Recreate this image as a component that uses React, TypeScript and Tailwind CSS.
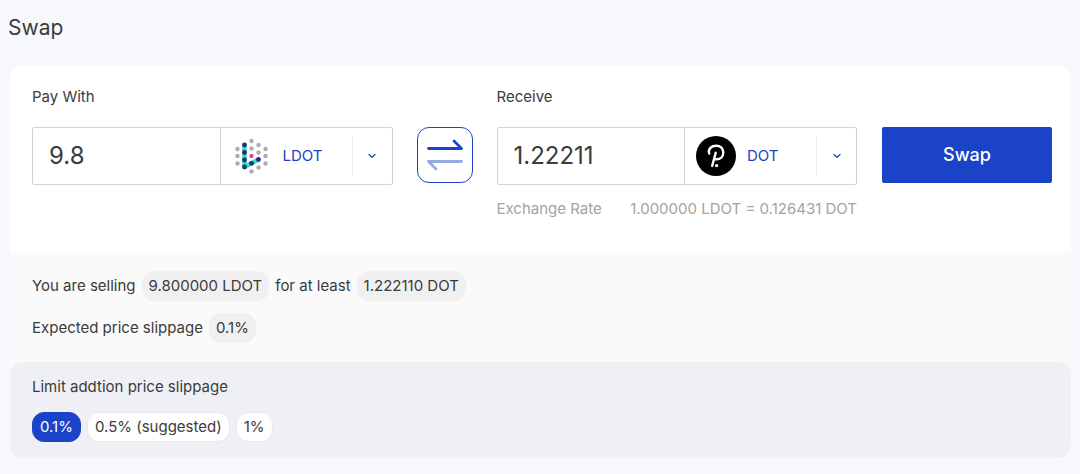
import { useState } from "react";
import type { ReactNode } from "react";

const GRAY_DOTS = [
  [19.5, 5], [26.5, 9], [33.5, 13], [5.5, 13], [5.5, 20], [5.5, 27.5], [19.5, 12.5], [26.5, 16.5], [33.5, 20], [33.5, 27.5], [26.5, 31.5], [19.5, 35.5],
];
const NAVY_DOTS = [[12.5, 9], [12.5, 16.5], [12.5, 24], [12.5, 31], [19.5, 27.3], [26.5, 23.5]];

function LdotLogo() {
  return (
    <svg viewBox="0 0 40 40" className="size-10" aria-hidden="true">
      <path d="M12.500 9V31L26.500 23.500" fill="none" stroke="#3fdcb8" strokeWidth="4.600" strokeLinejoin="round" />
      {GRAY_DOTS.map(([x, y]) => (
        <circle key={`${x}-${y}`} cx={x} cy={y} r="2.2" fill="#adadad" />
      ))}
      {NAVY_DOTS.map(([x, y]) => (
        <circle key={`${x}-${y}`} cx={x} cy={y} r="2.4" fill="#27307f" />
      ))}
      <circle cx="19.500" cy="20" r="2.2" fill="#d9489b" />
    </svg>
  );
}

function DotLogo() {
  return (
    <svg viewBox="0 0 40 40" className="size-10" aria-hidden="true">
      <circle cx="20" cy="20" r="20" fill="#000" />
      <path d="M13.200 17.500C11.800 12.800 15.500 9.700 20.200 9.700C24.500 9.700 27.300 12.600 27.300 16.500C27.300 20.500 24.500 23.300 20.500 23.300H18.300M19.700 16.800L16.200 29.800" fill="none" stroke="#fff" strokeWidth="2.400" strokeLinecap="round" />
      <circle cx="20.600" cy="29.600" r="1.600" fill="#fff" />
    </svg>
  );
}

type FieldProps = {
  id: string;
  label: string;
  amount: string;
  token: string;
  logo: ReactNode;
  children?: ReactNode;
};

function TokenField({ id, label, amount, token, logo, children }: FieldProps) {
  return (
    <div className="min-w-0 flex-1">
      <label htmlFor={id} className="block">{label}</label>
      <div className="mt-[19px] flex h-[58px] rounded-xs border border-[#d4d4d4]">
        <input
          id={id}
          defaultValue={amount}
          inputMode="decimal"
          className="w-0 min-w-0 flex-1 border-r border-[#d4d4d4] px-4 text-2xl outline-none"
        />
        <div className="relative w-[171px]">
          <span className="pointer-events-none absolute inset-y-0 left-[11px] flex items-center">{logo}</span>
          <select
            aria-label={`${label} token`}
            defaultValue={token}
            className="h-full w-full cursor-pointer appearance-none bg-transparent pl-[62px] text-[#1b43c7] outline-none"
          >
            <option>LDOT</option>
            <option>DOT</option>
          </select>
          <span className="pointer-events-none absolute inset-y-2 right-0 flex w-10 items-center justify-center border-l border-[#f0f0f0]">
            <svg viewBox="0 0 8 8" className="size-2 text-[#1b43c7]" fill="none" stroke="currentColor" strokeWidth="1.200" strokeLinecap="round" strokeLinejoin="round" aria-hidden="true">
              <path d="M1 2.500L4 5.300L7 2.500" />
            </svg>
          </span>
        </div>
      </div>
      {children}
    </div>
  );
}

function Pill({ children }: { children: ReactNode }) {
  return <span className="rounded-xl bg-[#f0f0f0] px-[7px] py-1">{children}</span>;
}

const LIMITS = ["0.1%", "0.5% (suggested)", "1%"];

export default function App() {
  const [limit, setLimit] = useState("0.1%");

  return (
    <main className="min-h-screen bg-[#f7f8fc] px-2 pt-3 pb-4 font-['Inter',sans-serif] text-[15px] leading-[22px] text-[#3b3b3b]">
      <h1 className="text-[21px] leading-8">Swap</h1>
      <section className="mt-[22px] mr-px ml-0.5 overflow-hidden rounded-xl bg-[#fafafa]">
        <form className="flex h-[186px] items-start bg-white pt-5 pr-[19px] pl-[22px]" onSubmit={(e) => e.preventDefault()}>
          <TokenField id="pay" label="Pay With" amount="9.8" token="LDOT" logo={<LdotLogo />} />
          <button type="button" aria-label="Switch tokens" className="mr-6 ml-6 mt-[41px] flex size-14 shrink-0 items-center justify-center rounded-xl border border-[#1b43c7]">
            <svg viewBox="0 0 56 56" className="size-14 shrink-0" fill="none" strokeWidth="2.800" strokeLinecap="round" strokeLinejoin="round" aria-hidden="true">
              <path d="M11.500 21.500H44.500L37 14" stroke="#1b43c7" />
              <path d="M44.500 34.500H11.500L19 42" stroke="#97a9e4" />
            </svg>
          </button>
          <TokenField id="receive" label="Receive" amount="1.22211" token="DOT" logo={<DotLogo />}>
            <div className="mt-[13px] flex justify-between whitespace-nowrap text-[#a3a3a3]">
              <span>Exchange Rate</span>
              <span>1.000000 LDOT = 0.126431 DOT</span>
            </div>
          </TokenField>
          <button type="submit" className="mt-[41px] ml-[25px] h-14 w-[170px] shrink-0 rounded-xs bg-[#1b43c7] text-lg font-medium text-white">
            Swap
          </button>
        </form>
        <div className="flex flex-col items-start gap-3 px-[22px] pt-[19px] pb-[19px]">
          <p className="flex items-center gap-1.5">
            You are selling <Pill>9.800000 LDOT</Pill> for at least <Pill>1.222110 DOT</Pill>
          </p>
          <p className="flex items-center gap-1.5">
            Expected price slippage <Pill>0.1%</Pill>
          </p>
        </div>
        <fieldset className="rounded-xl bg-[#eff0f5] px-[22px] pt-[14px] pb-4">
          <legend className="float-left w-full">Limit addtion price slippage</legend>
          <div className="clear-both flex gap-1.5 pt-[14px]">
            {LIMITS.map((value) => (
              <label key={value} className="relative cursor-pointer rounded-xl border border-[#e8e9ee] bg-white px-[7px] py-[3px] has-checked:border-[#1b43c7] has-checked:bg-[#1b43c7] has-checked:text-white">
                <input type="radio" name="limit" className="sr-only" checked={limit === value} onChange={() => setLimit(value)} />
                {value}
              </label>
            ))}
          </div>
        </fieldset>
      </section>
    </main>
  );
}
